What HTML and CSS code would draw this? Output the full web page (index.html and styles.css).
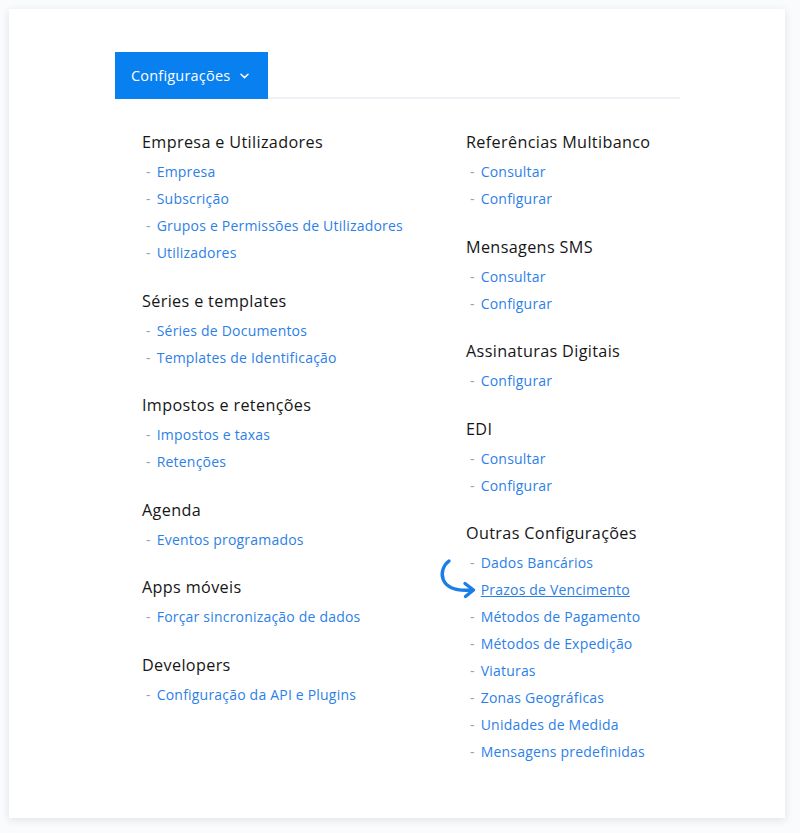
FILE: index.html
```html
<!DOCTYPE html>
<html lang="pt">
<head>
<meta charset="utf-8">
<title>Configurações</title>
<link rel="stylesheet" href="styles.css">
</head>
<body>
<div class="card">
  <div class="tabs">
    <div class="tab">Configurações
      <svg class="chev" width="9" height="6" viewBox="0 0 9 6"><path d="M1 1.2 L4.5 4.6 L8 1.2" fill="none" stroke="#fff" stroke-width="1.5" stroke-linecap="round" stroke-linejoin="round"/></svg>
    </div>
  </div>
  <div class="columns">
    <div class="col">
      <div class="section">
        <h3>Empresa e Utilizadores</h3>
        <ul>
          <li><a href="#">Empresa</a></li>
          <li><a href="#">Subscrição</a></li>
          <li><a href="#">Grupos e Permissões de Utilizadores</a></li>
          <li><a href="#">Utilizadores</a></li>
        </ul>
      </div>
      <div class="section">
        <h3>Séries e templates</h3>
        <ul>
          <li><a href="#">Séries de Documentos</a></li>
          <li><a href="#">Templates de Identificação</a></li>
        </ul>
      </div>
      <div class="section">
        <h3>Impostos e retenções</h3>
        <ul>
          <li><a href="#">Impostos e taxas</a></li>
          <li><a href="#">Retenções</a></li>
        </ul>
      </div>
      <div class="section">
        <h3>Agenda</h3>
        <ul>
          <li><a href="#">Eventos programados</a></li>
        </ul>
      </div>
      <div class="section">
        <h3>Apps móveis</h3>
        <ul>
          <li><a href="#">Forçar sincronização de dados</a></li>
        </ul>
      </div>
      <div class="section">
        <h3>Developers</h3>
        <ul>
          <li><a href="#">Configuração da API e Plugins</a></li>
        </ul>
      </div>
    </div>
    <div class="col">
      <div class="section">
        <h3>Referências Multibanco</h3>
        <ul>
          <li><a href="#">Consultar</a></li>
          <li><a href="#">Configurar</a></li>
        </ul>
      </div>
      <div class="section">
        <h3>Mensagens SMS</h3>
        <ul>
          <li><a href="#">Consultar</a></li>
          <li><a href="#">Configurar</a></li>
        </ul>
      </div>
      <div class="section">
        <h3>Assinaturas Digitais</h3>
        <ul>
          <li><a href="#">Configurar</a></li>
        </ul>
      </div>
      <div class="section">
        <h3>EDI</h3>
        <ul>
          <li><a href="#">Consultar</a></li>
          <li><a href="#">Configurar</a></li>
        </ul>
      </div>
      <div class="section">
        <h3>Outras Configurações</h3>
        <ul>
          <li><a href="#">Dados Bancários</a></li>
          <li class="active"><svg class="arrow" width="46" height="46" viewBox="0 0 46 46"><path d="M14 4 C3 12 2 36 37 33" fill="none" stroke="#1a7de8" stroke-width="3.4" stroke-linecap="round"/><path d="M30 26.5 L38.5 33 L30.5 39.5" fill="none" stroke="#1a7de8" stroke-width="3.4" stroke-linecap="round" stroke-linejoin="round"/></svg><a href="#">Prazos de Vencimento</a></li>
          <li><a href="#">Métodos de Pagamento</a></li>
          <li><a href="#">Métodos de Expedição</a></li>
          <li><a href="#">Viaturas</a></li>
          <li><a href="#">Zonas Geográficas</a></li>
          <li><a href="#">Unidades de Medida</a></li>
          <li><a href="#">Mensagens predefinidas</a></li>
        </ul>
      </div>
    </div>
  </div>
</div>
</body>
</html>
```
FILE: styles.css
```css
html, body {
  margin: 0;
  padding: 0;
  background: #fafbfc;
}
body {
  padding: 9px 15px 15px 9px;
  font-family: "Open Sans", "Noto Sans", sans-serif;
}
.card {
  width: 776px;
  height: 809px;
  box-sizing: border-box;
  background: #fff;
  box-shadow: 0 2px 8px rgba(40, 50, 90, 0.12);
  padding: 43px 0 0 106px;
}
.tabs {
  width: 565px;
  border-bottom: 2px solid #eef1f5;
  display: flex;
}
.tab {
  background: #0880f0;
  color: #fff;
  height: 47px;
  margin-bottom: -2px;
  padding: 0 19px 0 16px;
  display: flex;
  align-items: center;
  gap: 10px;
  font-size: 14.5px;
  letter-spacing: 0.2px;
  font-weight: 500;
}
.chev {
  margin-top: 1px;
}
.columns {
  display: grid;
  grid-template-columns: 324px 300px;
  padding: 32px 0 0 27px;
}
.section {
  margin-bottom: 23.6px;
}
h3 {
  margin: 0 0 5px 0;
  font-size: 16.2px;
  letter-spacing: 0.35px;
  line-height: 22px;
  font-weight: 500;
  color: #161616;
}
ul {
  list-style: none;
  margin: 0;
  padding: 0;
}
li {
  position: relative;
  font-size: 14px;
  letter-spacing: 0.2px;
  line-height: 27px;
  padding-left: 4px;
  color: #9aa1aa;
}
li::before {
  content: "-";
  margin-right: 6px;
}
li.active::before {
  color: transparent;
}
a {
  color: #2d7fe8;
  text-decoration: none;
}
li.active a {
  text-decoration: underline;
}
.arrow {
  position: absolute;
  left: -31px;
  top: -19px;
}
```
